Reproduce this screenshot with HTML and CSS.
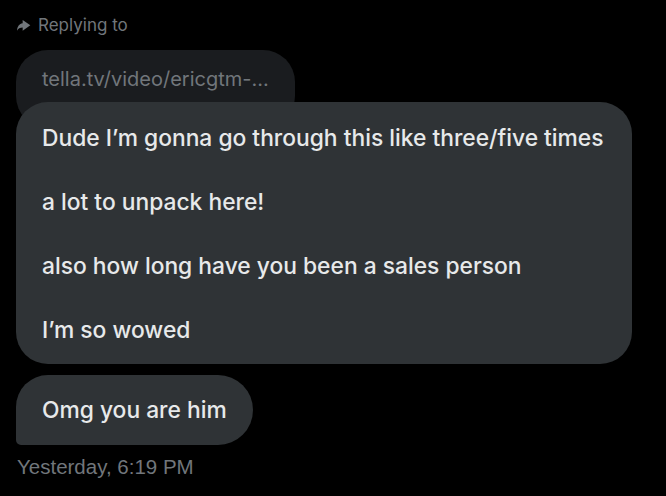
FILE: index.html
```html
<!DOCTYPE html>
<html>
<head>
<meta charset="utf-8">
<link rel="stylesheet" href="styles.css">
</head>
<body>
<div class="thread">
  <div class="replying">
    <svg class="reply-icon" viewBox="0 0 24 24" width="16" height="16"><path d="M10 4.5 L21.5 12.5 L10 20.5 V15.8 C6 15.8 3.2 17.3 1.6 20.6 C1.9 14.2 5 10 10 9.3 Z" fill="#71767b"/></svg>
    <span>Replying to</span>
  </div>
  <div class="quote">tella.tv/video/ericgtm-...</div>
  <div class="bubble main">
    <p>Dude I’m gonna go through this like three/five times</p>
    <p>a lot to unpack here!</p>
    <p>also how long have you been a sales person</p>
    <p>I’m so wowed</p>
  </div>
  <div class="bubble last">Omg you are him</div>
  <div class="time">Yesterday, 6:19 PM</div>
</div>
</body>
</html>
```
FILE: styles.css
```css
html, body {
  margin: 0;
  background: #000;
}
.thread {
  padding: 14px 0 0 16px;
  display: flex;
  flex-direction: column;
  align-items: flex-start;
  font-family: Inter, "Noto Sans", sans-serif;
}
.replying {
  display: flex;
  align-items: center;
  gap: 6px;
  color: #71767b;
  font-size: 17px;
  line-height: 22px;
  height: 22px;
}
.reply-icon {
  display: block;
}
.quote {
  margin-top: 14px;
  background: #1a1c1f;
  color: #71767b;
  font-size: 20px;
  line-height: 26px;
  padding: 16px 26px 36px 26px;
  border-radius: 32px;
  width: 227px;
  white-space: nowrap;
}
.bubble {
  position: relative;
  background: #2f3336;
  color: #e7e9ea;
  font-size: 22.8px;
  font-weight: 500;
  line-height: 32px;
  border-radius: 32px;
  padding: 19px 26px;
}
.main {
  margin-top: -26px;
  width: 564px;
  padding-top: 20px;
  padding-bottom: 18px;
}
.main p {
  margin: 0 0 32px 0;
  white-space: nowrap;
}
.main p:last-child {
  margin-bottom: 0;
}
.last {
  margin-top: 11px;
  border-radius: 32px 35px 35px 5px;
  padding-right: 26px;
}
.time {
  margin-top: 11px;
  color: #71767b;
  font-family: "Liberation Sans", Arial, sans-serif;
  font-size: 20.5px;
  line-height: 22px;
  padding-left: 1px;
}
```
